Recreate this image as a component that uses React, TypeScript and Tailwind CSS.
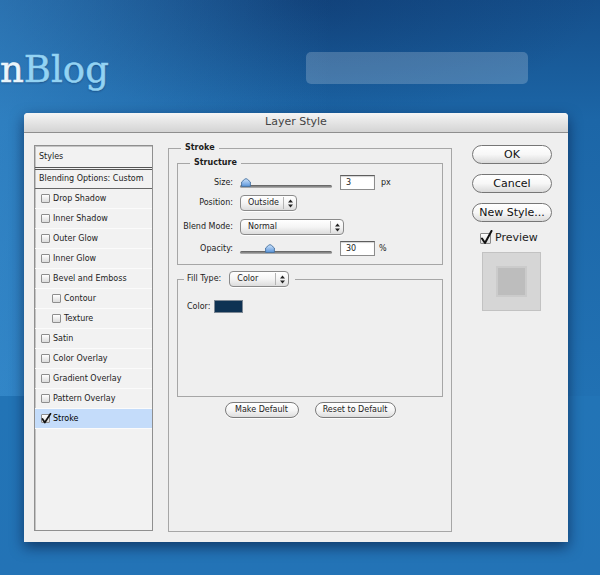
import React from 'react';

const effects = [
  { name: 'Drop Shadow' },
  { name: 'Inner Shadow' },
  { name: 'Outer Glow' },
  { name: 'Inner Glow' },
  { name: 'Bevel and Emboss' },
  { name: 'Contour', sub: true },
  { name: 'Texture', sub: true },
  { name: 'Satin' },
  { name: 'Color Overlay' },
  { name: 'Gradient Overlay' },
  { name: 'Pattern Overlay' },
  { name: 'Stroke', checked: true },
];

function CheckMark({ big }: { big?: boolean }) {
  return big ? (
    <svg width="14" height="15" viewBox="0 0 14 15" className="absolute -left-[1px] -top-[4px]">
      <path d="M2 8.5 L5 13 L11.5 1" fill="none" stroke="#111" strokeWidth="2" strokeLinecap="round" strokeLinejoin="round" />
    </svg>
  ) : (
    <svg width="11" height="11" viewBox="0 0 11 11" className="absolute -left-[1px] -top-[2px]">
      <path d="M1.5 6 L3.8 9.5 L9.5 0.8" fill="none" stroke="#111" strokeWidth="1.7" strokeLinecap="round" strokeLinejoin="round" />
    </svg>
  );
}

function Box({ checked }: { checked?: boolean }) {
  return (
    <div className="relative w-[9px] h-[9px] shrink-0 rounded-[1px] border border-[#8e8e8e] bg-gradient-to-b from-white to-[#dcdcdc]">
      {checked ? <CheckMark /> : null}
    </div>
  );
}

function Arrows() {
  return (
    <svg width="5" height="9" viewBox="0 0 5 9">
      <path d="M2.5 0.5 L5 3.5 L0 3.5 Z" fill="#222" />
      <path d="M0 5.5 L5 5.5 L2.5 8.5 Z" fill="#222" />
    </svg>
  );
}

function Popup({ label, width, arrowW = 12 }: { label: string; width: string; arrowW?: number }) {
  return (
    <div className={`flex items-center h-[16px] ${width} rounded-[4px] border border-[#8a8a8a] bg-gradient-to-b from-white via-[#f5f5f5] to-[#dcdcdc] shadow-[0_1px_0_rgba(255,255,255,0.9)]`}>
      <span className="flex-1 pl-[7px] leading-[14px]">{label}</span>
      <div className="w-px h-[12px] bg-[#b4b4b4]" />
      <div className="flex justify-center items-center" style={{ width: arrowW }}>
        <Arrows />
      </div>
    </div>
  );
}

function Slider({ value, max }: { value: number; max: number }) {
  const left = Math.round((value / max) * 83);
  return (
    <div className="relative w-[92px] h-[12px] flex items-end pb-[1px]">
      <div className="w-full h-[3px] rounded-full bg-gradient-to-b from-[#5a5a5a] to-[#b8b8b8]" />
      <svg width="10" height="9" viewBox="0 0 10 9" className="absolute top-[1px]" style={{ left }}>
        <defs>
          <linearGradient id={`th${max}`} x1="0" y1="0" x2="0" y2="1">
            <stop offset="0" stopColor="#cfe4fb" />
            <stop offset="1" stopColor="#5d97dc" />
          </linearGradient>
        </defs>
        <path d="M5 0.6 Q6 0.6 9.4 4 L9.4 8.4 L0.6 8.4 L0.6 4 Q4 0.6 5 0.6 Z" fill={`url(#th${max})`} stroke="#46709f" strokeWidth="0.9" />
      </svg>
    </div>
  );
}

function Field({ value }: { value: string }) {
  return (
    <div className="w-[35px] h-[15px] bg-white border border-[#8c8c8c] border-t-[#5e5e5e] shadow-[inset_0_1px_1px_rgba(0,0,0,0.18)] pl-[5px] leading-[13px]">
      {value}
    </div>
  );
}

function PillButton({ label, width }: { label: string; width: string }) {
  return (
    <div className={`${width} h-[16px] rounded-full border border-[#7b7b7b] bg-gradient-to-b from-white via-[#f6f6f6] to-[#dedede] flex items-center justify-center leading-[14px] shadow-[0_1px_0_rgba(255,255,255,0.8)]`}>
      {label}
    </div>
  );
}

function BigButton({ label }: { label: string }) {
  return (
    <div className="w-[80px] h-[19px] rounded-full border border-[#767676] bg-gradient-to-b from-white via-[#f7f7f7] to-[#dadada] flex items-center justify-center text-[11px] leading-[17px] text-[#111]">
      {label}
    </div>
  );
}

export default function App() {
  return (
    <div className="w-[600px] h-[575px] overflow-hidden font-['DejaVu_Sans',sans-serif] bg-no-repeat bg-[linear-gradient(90deg,rgba(75,165,230,0.4),rgba(75,165,230,0)_330px),radial-gradient(ellipse_300px_120px_at_300px_0px,rgba(10,40,90,0.35),transparent),linear-gradient(180deg,#154f8b_0px,#1c66a7_120px,#2171b3_396px,#2274b6_396px,#2373b6_575px)] [background-size:600px_396px,100%_100%,100%_100%]">
      <header className="flex h-[113px]">
        <div className="pt-[51px] text-[37px] leading-[37px] font-['DejaVu_Serif',serif] [-webkit-text-stroke:0.5px_currentColor] [text-shadow:0_1px_2px_rgba(0,20,60,0.45)]">
          <span className="text-[#eaf5fb]">n</span>
          <span className="text-[#93d3f3]">Blog</span>
        </div>
        <div className="ml-auto mr-[72px] mt-[52px] w-[222px] h-[32px] rounded-[5px] bg-white/20" />
      </header>

      <div className="ml-[24px] w-[544px] h-[429px] rounded-t-[4px] bg-[#efefef] shadow-[0_5px_14px_rgba(0,10,40,0.55)] flex flex-col overflow-hidden text-[8px] text-[#1c1c1c]">
        <div className="h-[20px] shrink-0 border-b border-[#8e8e8e] bg-gradient-to-b from-[#f5f5f5] to-[#d4d4d4] flex items-center justify-center text-[11px] text-[#444]">
          Layer Style
        </div>

        <div className="flex items-start pl-[10px] pt-[10px]">
          {/* styles list */}
          <div className="mt-[2px] w-[119px] h-[386px] border border-[#8f8f8f] shadow-[inset_1px_1px_0_#c4c4c4] bg-[#f2f2f2] flex flex-col">
            <div className="h-[24px] pl-[4px] flex items-center border-b-[3px] border-double border-[#555]">Styles</div>
            <div className="h-[19px] pl-[4px] flex items-center border-b border-[#666]">Blending Options: Custom</div>
            {effects.map((e) => (
              <div
                key={e.name}
                className={`h-[20px] flex items-center gap-[3px] border-b border-[#fbfbfb] ${e.sub ? 'pl-[17px]' : 'pl-[6px]'} ${e.checked ? 'bg-[#c4dcfa] text-black' : ''}`}
              >
                <Box checked={e.checked} />
                <span>{e.name}</span>
              </div>
            ))}
          </div>

          {/* stroke settings */}
          <fieldset className="ml-[15px] w-[284px] h-[389px] min-w-0 border border-[#a6a6a6] px-[8px]">
            <legend className="ml-[4px] px-[4px] font-bold leading-[10px]">Stroke</legend>

            <fieldset className="mt-[5px] min-w-0 border border-[#a6a6a6]">
              <legend className="ml-[12px] px-[4px] font-bold leading-[10px]">Structure</legend>
              <div className="flex flex-col pt-[7px] pb-[8px]">
                <div className="flex items-center h-[15px]">
                  <span className="w-[55px] text-right">Size:</span>
                  <div className="ml-[7px]"><Slider value={3} max={250} /></div>
                  <div className="ml-[8px]"><Field value="3" /></div>
                  <span className="ml-[6px]">px</span>
                </div>
                <div className="flex items-center h-[16px] mt-[5px]">
                  <span className="w-[55px] text-right">Position:</span>
                  <div className="ml-[7px]"><Popup label="Outside" width="w-[57px]" /></div>
                </div>
                <div className="flex items-center h-[16px] mt-[8px]">
                  <span className="w-[55px] text-right">Blend Mode:</span>
                  <div className="ml-[7px]"><Popup label="Normal" width="w-[104px]" /></div>
                </div>
                <div className="flex items-center h-[15px] mt-[6px]">
                  <span className="w-[55px] text-right">Opacity:</span>
                  <div className="ml-[7px]"><Slider value={30} max={100} /></div>
                  <div className="ml-[8px]"><Field value="30" /></div>
                  <span className="ml-[4px]">%</span>
                </div>
              </div>
            </fieldset>

            <fieldset className="mt-[6px] h-[126px] min-w-0 border border-[#a6a6a6]">
              <legend className="ml-[6px] pl-[3px] pr-[6px] flex items-center h-[16px]">
                <span>Fill Type:</span>
                <div className="ml-[8px]"><Popup label="Color" width="w-[60px]" /></div>
              </legend>
              <div className="flex items-center pt-[13px] pl-[9px]">
                <span>Color:</span>
                <div className="ml-[4px] w-[29px] h-[13px] bg-[#0e3253] border border-[#7d8894]" />
              </div>
            </fieldset>

            <div className="mt-[5px] flex justify-center gap-[16px]">
              <PillButton label="Make Default" width="w-[74px]" />
              <PillButton label="Reset to Default" width="w-[81px]" />
            </div>
          </fieldset>

          {/* actions */}
          <div className="ml-[20px] mt-[2px] w-[80px] flex flex-col gap-[10px]">
            <BigButton label="OK" />
            <BigButton label="Cancel" />
            <BigButton label="New Style..." />
            <div className="flex items-center ml-[8px] h-[12px] text-[11px]">
              <div className="relative w-[11px] h-[11px] rounded-[1px] border border-[#8a8a8a] bg-gradient-to-b from-white to-[#dcdcdc]">
                <CheckMark big />
              </div>
              <span className="ml-[4px]">Preview</span>
            </div>
            <div className="ml-[10px] mt-[-2px] w-[59px] h-[59px] border border-[#c2c2c2] bg-[#d6d6d6] flex items-center justify-center">
              <div className="w-[31px] h-[31px] bg-[#cbcbcb] flex items-center justify-center">
                <div className="w-[27px] h-[27px] bg-[#bdbdbd]" />
              </div>
            </div>
          </div>
        </div>
      </div>
    </div>
  );
}
